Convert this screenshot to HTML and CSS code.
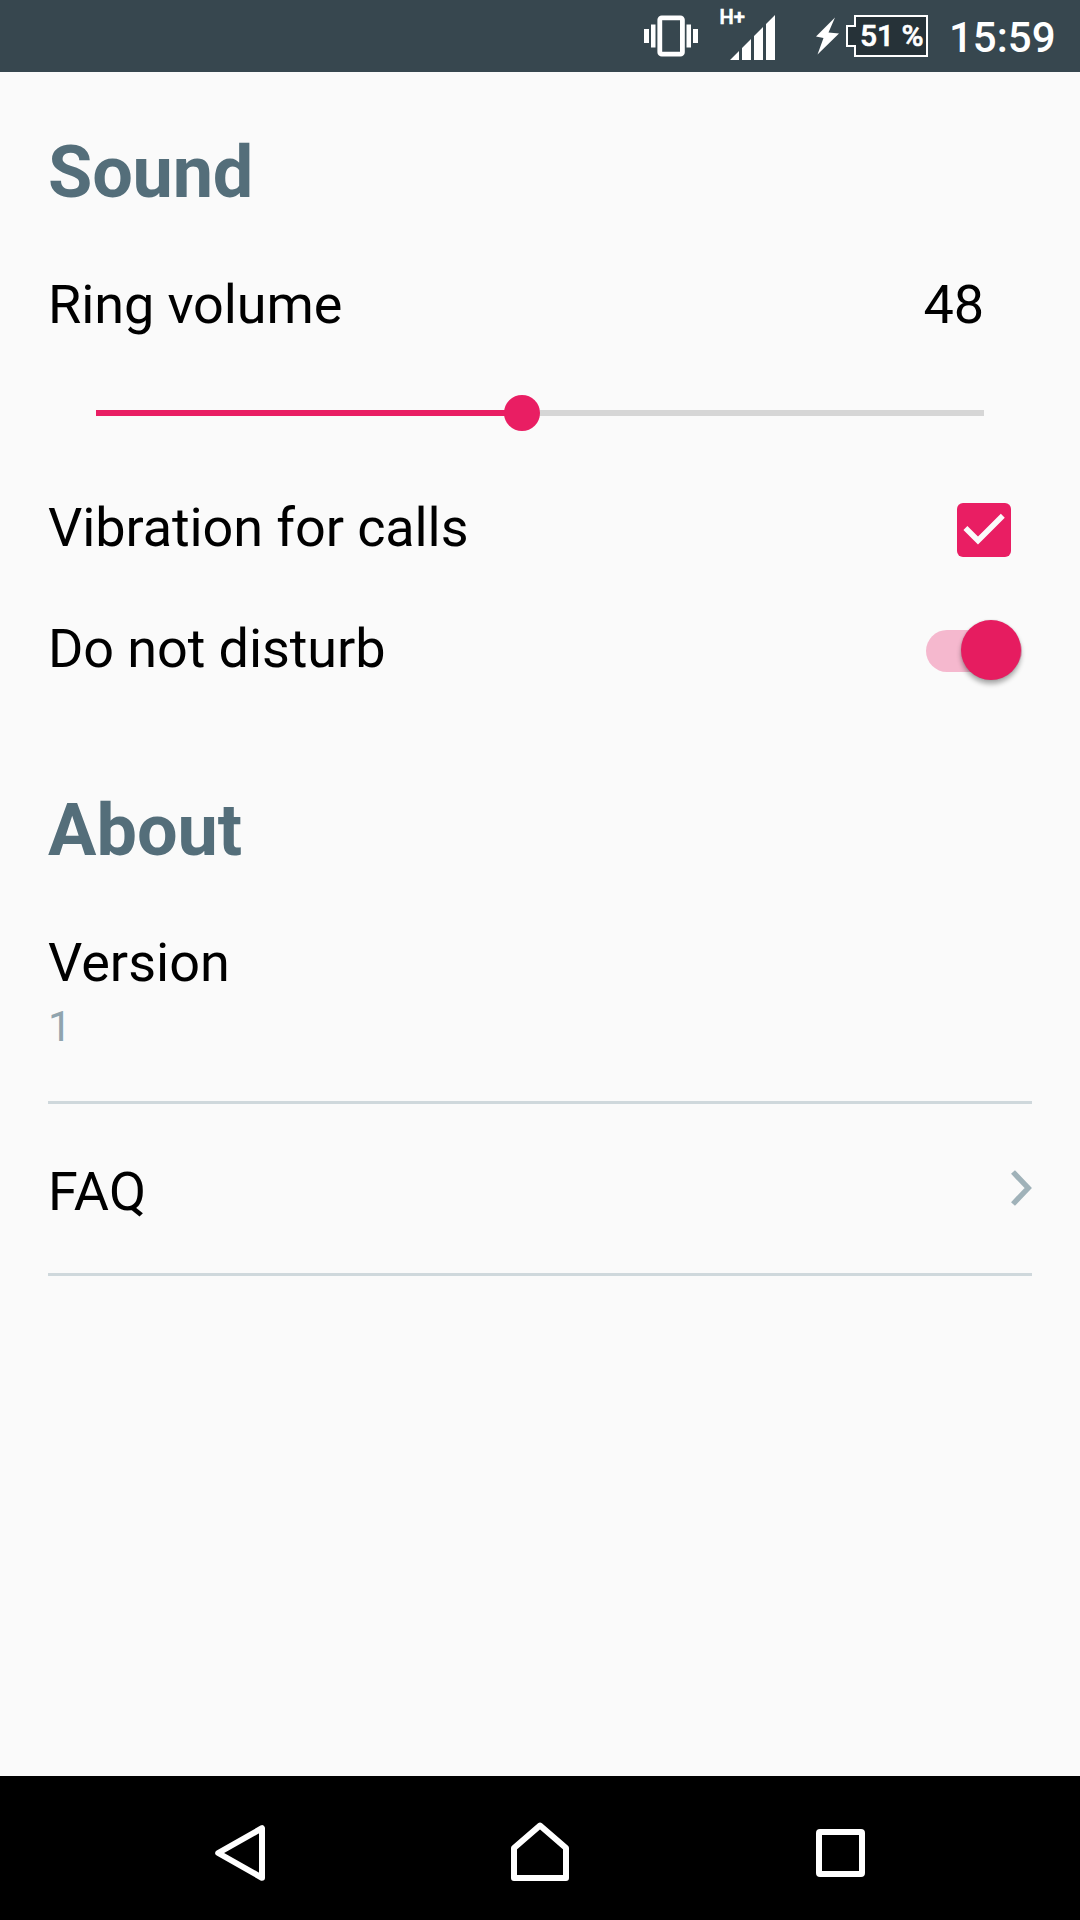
FILE: index.html
```html
<!DOCTYPE html>
<html lang="en">
<head>
<meta charset="utf-8">
<title>Settings</title>
<link rel="stylesheet" href="styles.css">
</head>
<body>
<header class="status-bar">
  <svg class="vibrate" width="54" height="42" viewBox="0 0 54 42">
    <rect x="15.8" y="2.8" width="22.6" height="36.4" rx="2" fill="none" stroke="#fff" stroke-width="4.8"/>
    <path fill="#fff" d="M0 14h5v14H0zM7 9.5h4.5v23H7zM42.5 9.5H47v23h-4.5zM49 14h5v14h-5z"/>
  </svg>
  <svg class="signal" width="56" height="54" viewBox="0 0 56 54">
    <text class="network" x="-0.5" y="17.5">H+</text>
    <path fill="#fff" d="M10 54l9-9v9zM22 54V42l9-9v21zM34 54V30l9-9v33zM46 54V18l9-9v45z"/>
  </svg>
  <svg class="bolt" width="24" height="38" viewBox="0 0 24 38">
    <path fill="#fff" d="M19 0.5L12.5 15.6L23 16.4L1.5 37.5L7.5 21L0 19.5z"/>
  </svg>
  <svg class="battery" width="82" height="42" viewBox="0 0 82 42">
    <path fill="#263238" stroke="#fff" stroke-width="2" d="M9 1h72v40H9V31H1V11h8z"/>
    <text class="percent" x="14" y="31.3">51 %</text>
  </svg>
  <time class="clock">15:59</time>
</header>

<main class="settings">
  <section class="section">
    <h2 class="title title-sound">Sound</h2>
    <div class="row volume">
      <span>Ring volume</span>
      <span class="value">48</span>
    </div>
    <div class="slider">
      <div class="slider-fill" style="width: 48%"></div>
      <div class="slider-thumb"></div>
      <div class="slider-rest"></div>
    </div>
    <div class="row vibration">
      <span>Vibration for calls</span>
      <svg class="checkbox" width="54" height="54" viewBox="0 0 54 54">
        <rect width="54" height="54" rx="6" fill="#e91e63"/>
        <path d="M8.4 25L21 37.6L45.8 12.8" fill="none" stroke="#fafafa" stroke-width="5.6"/>
      </svg>
    </div>
    <div class="row disturb">
      <span>Do not disturb</span>
      <div class="switch"><div class="switch-thumb"></div></div>
    </div>
  </section>

  <section class="section about">
    <h2 class="title">About</h2>
    <div class="item version">
      <span>Version</span>
      <span class="detail">1</span>
    </div>
    <div class="item faq">
      <span>FAQ</span>
      <svg class="chevron" width="21" height="36" viewBox="0 0 21 36">
        <path d="M2 2L17.2 18L2 34" fill="none" stroke="#a0b2b9" stroke-width="5.4"/>
      </svg>
    </div>
  </section>
</main>

<nav class="nav-bar">
  <svg width="50" height="56" viewBox="0 0 50 56">
    <path d="M47 3.2V52.8L3.2 28z" fill="none" stroke="#fff" stroke-width="6" stroke-linejoin="round"/>
  </svg>
  <svg class="home" width="58" height="60" viewBox="0 0 58 60">
    <path d="M3 56V26L29 3.500L55 26V56z" fill="none" stroke="#fff" stroke-width="6" stroke-linejoin="round"/>
  </svg>
  <svg width="49" height="48" viewBox="0 0 49 48">
    <rect x="3" y="3" width="43" height="42" rx="1" fill="none" stroke="#fff" stroke-width="6"/>
  </svg>
</nav>
</body>
</html>
```

FILE: styles.css
```css
* {
  box-sizing: border-box;
}

body {
  margin: 0;
  width: 1080px;
  height: 1920px;
  display: flex;
  flex-direction: column;
  background: #fafafa;
  color: #000;
  font-family: Roboto, sans-serif;
  font-size: 54px;
  line-height: 63px;
  overflow: hidden;
}

svg {
  display: block;
  flex: none;
}

/* Status bar */
.status-bar {
  flex: none;
  display: flex;
  align-items: flex-start;
  height: 72px;
  padding: 15px 0 0 644px;
  background: #37474f;
  color: #fff;
}

.signal {
  margin: -9px 0 0 22px;
  overflow: visible;
}

.network {
  fill: #fff;
  stroke: #fff;
  stroke-width: 0.7px;
  font-size: 20px;
  font-weight: 500;
}

.bolt {
  margin: 2px 0 0 40px;
}

.battery {
  margin-left: 6px;
}

.percent {
  fill: #fff;
  stroke: #fff;
  stroke-width: 0.6px;
  font-size: 30px;
  font-weight: 500;
}

.clock {
  margin: -2px 0 0 21px;
  font-size: 42px;
  font-weight: 500;
  line-height: 49px;
}

/* Settings list */
.settings {
  flex: 1;
  padding: 58px 48px 0;
}

.section {
  display: flex;
  flex-direction: column;
}

.about {
  margin-top: 108px;
}

.title {
  margin: 0 0 58px;
  color: #546e7a;
  font-size: 72px;
  font-weight: 700;
  line-height: 85px;
}

.title-sound {
  letter-spacing: -0.2px;
}

.row {
  display: flex;
  align-items: flex-start;
  justify-content: space-between;
  height: 63px;
  letter-spacing: -0.1px;
}

.volume {
  padding-right: 48px;
}

.vibration {
  padding-right: 21px;
}

.checkbox {
  margin-top: 7px;
}

.disturb {
  margin-top: 58px;
  padding-right: 10px;
}

.slider {
  display: flex;
  align-items: center;
  height: 36px;
  margin: 59px 48px 65px;
}

.slider-fill {
  height: 6px;
  background: #e91e63;
}

.slider-thumb {
  flex: none;
  width: 36px;
  height: 36px;
  margin: 0 -18px;
  border-radius: 50%;
  background: #e91e63;
  z-index: 1;
}

.slider-rest {
  flex: 1;
  height: 6px;
  background: #d6d6d6;
}

.switch {
  display: flex;
  align-items: center;
  justify-content: flex-end;
  width: 96px;
  height: 42px;
  margin-top: 13px;
  border-radius: 21px;
  background: #f5b8ce;
}

.switch-thumb {
  width: 60px;
  height: 60px;
  margin: -2px 1px 0 0;
  border-radius: 50%;
  background: #e61c60;
  box-shadow: 0 4px 5px rgba(0, 0, 0, 0.32), 0 0 2px rgba(0, 0, 0, 0.15);
}

.item {
  display: flex;
  border-bottom: 3px solid #cfd8dc;
}

.version {
  flex-direction: column;
  gap: 8px;
  height: 173px;
}

.detail {
  color: #90a4ae;
  font-size: 42px;
  line-height: 49px;
}

.faq {
  justify-content: space-between;
  height: 172px;
  padding-top: 56px;
  letter-spacing: 0.3px;
}

.chevron {
  margin-top: 10px;
}

/* Navigation bar */
.nav-bar {
  flex: none;
  display: flex;
  align-items: center;
  justify-content: space-between;
  height: 144px;
  padding: 10px 215px 0;
  background: #000;
}

.home {
  margin: 0 0 2px -1px;
}
```
